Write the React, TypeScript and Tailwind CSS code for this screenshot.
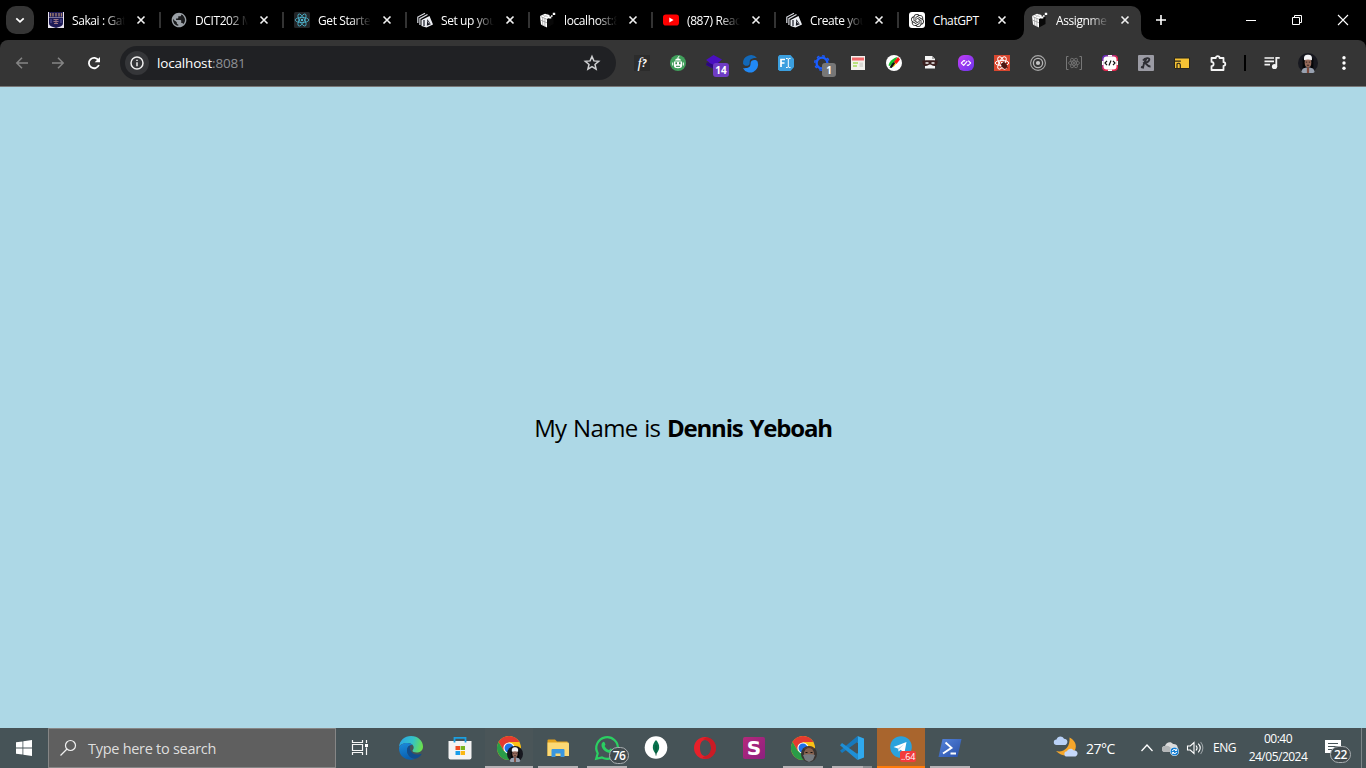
import React from 'react';
import { SiOpenai } from 'react-icons/si';

type IconProps = { children: React.ReactNode; size?: number; className?: string };

function Icon({ children, size = 16, className = '' }: IconProps) {
  return (
    <svg width={size} height={size} viewBox={`0 0 ${size} ${size}`} fill="none" className={`block shrink-0 overflow-visible ${className}`}>
      {children}
    </svg>
  );
}

/* ---------- favicons ---------- */

const CrestIcon = () => (
  <Icon>
    <rect width="16" height="16" fill="#e9e4ee" />
    <path d="M1 0h14v10c0 3.500-.5 4-7 6-6.500-2-7-2.500-7-6z" fill="#1d1a56" />
    <path d="M2.500 1v3.500M5 1v3.500M8 1v3.500M11 1v3.500M13.500 1v3.500" stroke="#a5836f" strokeWidth="1.300" />
    <path d="M1 5.500h14" stroke="#b9b4d2" strokeWidth=".6" />
    <path d="M5.500 7.500h5M8 7v5M5.500 9.500h5M6 11.500h4" stroke="#a98088" strokeWidth=".9" />
    <path d="M3 7v4M13 7v4" stroke="#5d5aa0" />
  </Icon>
);

const GlobeIcon = () => (
  <Icon>
    <circle cx="8" cy="8" r="5.500" fill="#1b1c1e" />
    <path
      transform="translate(-.8 -.8) scale(.735)"
      fill="#9aa0a6"
      d="M12 2C6.480 2 2 6.480 2 12s4.480 10 10 10 10-4.480 10-10S17.520 2 12 2zm-1 17.930c-3.950-.49-7-3.850-7-7.930 0-.62.08-1.210.21-1.790L9 15v1c0 1.100.9 2 2 2v1.930zm6.900-2.540c-.26-.81-1-1.390-1.900-1.390h-1v-3c0-.55-.45-1-1-1H8v-2h2c.55 0 1-.45 1-1V7h2c1.100 0 2-.9 2-2v-.41c2.930 1.190 5 4.060 5 7.410 0 2.080-.8 3.970-2.100 5.390z"
    />
    <path d="M3 7c1 2 3 2 5 2" stroke="#9aa0a6" strokeWidth="1.500" />
  </Icon>
);

function Atom({ color, w = 0.8 }: { color: string; w?: number }) {
  return (
    <g stroke={color} strokeWidth={w}>
      <ellipse cx="8" cy="8" rx="6.800" ry="2.600" />
      <ellipse cx="8" cy="8" rx="6.800" ry="2.600" transform="rotate(60 8 8)" />
      <ellipse cx="8" cy="8" rx="6.800" ry="2.600" transform="rotate(120 8 8)" />
      <circle cx="8" cy="8" r="1.200" fill={color} stroke="none" />
    </g>
  );
}

const ReactIcon = () => (
  <Icon>
    <rect width="16" height="16" rx="1.500" fill="#232629" />
    <Atom color="#4fb8d2" />
  </Icon>
);

const ExpoRouterIcon = () => (
  <Icon>
    <path d="M.8 11V5L8 1.200M2.900 13V6.600L10.500 2.500" stroke="#d9dbe2" strokeWidth="1.200" />
    <path d="M4.500 8 12.500 4 16 12.500 9.500 15.500 4.500 14z" fill="#eceef3" />
    <path d="m10.300 7 3.500 5.200-4 1.500z" fill="#171821" /><path d="M7 8v6" stroke="#23242e" strokeWidth="1.300" />
    <path d="m10.800 9.500 1.500 2.200" stroke="#eceef3" strokeWidth=".7" />
  </Icon>
);

const CubeIcon = () => (
  <Icon>
    <path d="M7 7 13.500 5v7L7 15.500z" fill="#080808" />
    <path d="M0 4 5 1.800l4.500 1.200V5.500L7 7v8.500L1 12.500z" fill="#fff" />
    <path d="M.3 8l6.700 2.800M.5 4.500 7 7.300M2.700 5v8.500M4.900 6v8.800" stroke="#8f8f8f" strokeWidth=".7" />
    <path d="M2.500 3.200 8 4.800M7.300 2.300 4 5" stroke="#b0b0b0" strokeWidth=".6" />
    <path d="M8.500 4.500h2.800v2H8.500zM12.800.8h2.400v2.300h-2.400zM11 3.300h1.600v1.400H11z" fill="#fff" />
  </Icon>
);

const YouTubeIcon = () => (
  <Icon>
    <rect x="0" y="2.500" width="16" height="11" rx="2.800" fill="#f00" />
    <path d="m6.300 5.600 4.300 2.400-4.300 2.400z" fill="#fff" />
  </Icon>
);

const ChatGPTIcon = () => (
  <span className="flex size-4 shrink-0 items-center justify-center rounded-[3px] bg-white text-[#222]">
    <SiOpenai size={13} />
  </span>
);

type Tab = { title: string; icon: React.ReactNode };

const tabs: Tab[] = [
  { title: 'Sakai : Gat', icon: <CrestIcon /> },
  { title: 'DCIT202 M', icon: <GlobeIcon /> },
  { title: 'Get Starte', icon: <ReactIcon /> },
  { title: 'Set up you', icon: <ExpoRouterIcon /> },
  { title: 'localhost:8', icon: <CubeIcon /> },
  { title: '(887) Reac', icon: <YouTubeIcon /> },
  { title: 'Create you', icon: <ExpoRouterIcon /> },
  { title: 'ChatGPT', icon: <ChatGPTIcon /> },
];

const CloseX = () => (
  <Icon size={10}>
    <path d="m1.500 1.500 7 7m0-7-7 7" stroke="#f1f1f1" strokeWidth="1.600" />
  </Icon>
);

function TabTitle({ children }: { children: string }) {
  return (
    <span className="ml-2 w-[53px] shrink-0 whitespace-nowrap pt-px text-[12px] leading-4 tracking-[-0.4px] text-white [mask-image:linear-gradient(to_right,#000_62%,transparent_100%)]">
      {children}
    </span>
  );
}

function TabStrip() {
  return (
    <div className="flex h-10 items-start bg-black">
      <div className="ml-1.5 mt-1.5 flex size-7 items-center justify-center rounded-[10px] bg-[#353535]">
        <Icon size={10}><path d="m1.300 3.300 3.700 3.500 3.700-3.500" stroke="#fff" strokeWidth="1.800" /></Icon>
      </div>
      <div className="ml-[3px] flex">
        {tabs.map((t, i) => (
          <div key={i} className="flex h-10 w-[123px] items-center pl-[11px]">
            {t.icon}
            {t.title === 'ChatGPT' ? (
              <span className="ml-2 w-[53px] shrink-0 pt-px text-[12px] leading-4 tracking-[-0.4px] text-white">{t.title}</span>
            ) : (
              <TabTitle>{t.title}</TabTitle>
            )}
            <span className="ml-[11px]"><CloseX /></span>
            <span className={i < 7 ? 'ml-[13px] h-4 w-0.5 shrink-0 bg-[#333]' : 'w-0'} />
          </div>
        ))}
      </div>
      <div className="flex h-10 items-end">
        <svg width="10" height="10" viewBox="0 0 10 10" className="-ml-[7px] block"><path d="M10 0v10H0A10 10 0 0 0 10 0z" fill="#353535" /></svg>
        <div className="flex h-[34px] w-[117px] items-center rounded-t-[10px] bg-[#353535] pb-1.5 pl-2">
          <CubeIcon />
          <TabTitle>Assignme</TabTitle>
          <span className="ml-[11px]"><CloseX /></span>
        </div>
        <svg width="10" height="10" viewBox="0 0 10 10" className="block"><path d="M0 0v10h10A10 10 0 0 1 0 0z" fill="#353535" /></svg>
      </div>
      <div className="ml-1 flex h-10 items-center">
        <Icon size={12}><path d="M6 1v10M1 6h10" stroke="#fff" strokeWidth="1.600" /></Icon>
      </div>
      <div className="ml-auto flex h-10 items-center gap-9 pr-[18px]">
        <Icon size={10}><path d="M0 5.500h10" stroke="#fff" /></Icon>
        <Icon size={10}><path d="M.5 2.500h7v7h-7zM2.500 2.500v-2h7v7h-2" stroke="#fff" /></Icon>
        <Icon size={10}><path d="m0 0 10 10M10 0 0 10" stroke="#fff" strokeWidth="1.100" /></Icon>
      </div>
    </div>
  );
}

/* ---------- extensions ---------- */

function CountBadge({ children, color }: { children: string; color: string }) {
  return (
    <span className={`absolute left-[7px] top-2 flex h-[14px] items-center justify-center rounded-[3px] text-[10px] font-bold leading-none text-white ${color}`}>
      {children}
    </span>
  );
}

const extensions: React.ReactNode[] = [
  <span className="flex size-4 items-center justify-center bg-[#2c2c2c] font-['Liberation_Serif',serif] text-[15px] italic leading-none text-white">f<span className="font-['Open_Sans',sans-serif] text-[10px] font-bold">?</span></span>,
  <Icon>
    <circle cx="8" cy="8" r="8" fill="#41a05c" />
    <path d="M5 5.500C5.300 4 6.500 3.500 8 3.500s2.700.5 3 2z" fill="#fff" /><path d="M8 4V2L9.500 1.200" stroke="#fff" strokeWidth=".9" />
    <path d="M4 6.500h8v4.500c0 1.500-1.500 2.200-4 2.200s-4-.7-4-2.200z" fill="#fff" />
    <path d="M6.200 7.300v2M9.800 7.300v2" stroke="#287f43" strokeWidth="1.500" /><path d="M6 11.300h4" stroke="#287f43" />
    <path d="M2.700 7.500v3M13.300 7.500v3" stroke="#fff" />
  </Icon>,
  <span className="relative block">
    <Icon><path d="M7.500 0 16 4.500 12 8l2 4-6 2-8-4 3.500-2.500L0 5z" fill="#4a0fc0" /><path d="m1 7 7 3 5-2.500-1 5-4 1.500-8-4z" fill="#2b087d" /></Icon>
    <CountBadge color="w-4 bg-[#6f3cc4]">14</CountBadge>
  </span>,
  <Icon>
    <path d="M15 2.800A8 8 0 0 0 1 8.500C2 11 5 11.500 7 10c1.300-1 .3-3 1-4.700C9 3.300 13 3 15 2.800z" fill="#1268b8" />
    <path d="M1 13.200A8 8 0 0 0 15.700 7C15 4.800 11.500 4.500 9.500 6 8 7.200 9 9.500 8 11.200 7 13 3 13.200 1 13.200z" fill="#2189f5" />
  </Icon>,
  <Icon>
    <path d="M1.500 0h11L16 4v8l-3.500 4h-11L0 14.500v-13z" fill="#3b9fdf" />
    <path d="M3 12V4.500h4M3 8h3.500" stroke="#fff" strokeWidth="1.700" />
    <path d="M8 3.500h1.500l.8.700.8-.7H12.500M8 12.500h1.500l.8-.7.8.7H12.500M10.300 4v8" stroke="#fff" />
  </Icon>,
  <span className="relative block">
    <Icon><circle cx="8" cy="8" r="5.400" stroke="#1a5cff" strokeWidth="2.300" /><circle cx="8" cy="8" r="7.200" stroke="#1a5cff" strokeWidth="1.500" strokeDasharray="2.800 2.850" /></Icon>
    <CountBadge color="w-[14px] ml-px bg-[#777]">1</CountBadge>
  </span>,
  <Icon>
    <path d="M1 1h14v14H1z" fill="#f2f1ed" /><path d="M2 2.500h12v3H2z" fill="#f2696b" />
    <path d="M3 8h5M3 11h4" stroke="#a7dc5a" strokeWidth="1.400" /><path d="M9.500 7.500H13V12H9.500z" fill="#dad9d4" />
  </Icon>,
  <Icon>
    <circle cx="8" cy="8" r="8" fill="#fff" />
    <path d="M2.500 10.500C3 7 7 3 11.500 2L9 7l-5 4z" fill="#17c02c" />
    <path d="M12 2 14 4.500 10.500 9 7.800 7z" fill="#f11" /><path d="m6 8.500 2-1.500 1.500 2-4 4-2-.5z" fill="#111" /><path d="m9 8.500 2-1-3 4-1.500.5z" fill="#fb0" />
  </Icon>,
  <Icon>
    <path d="M3 1h7l3 3v9.500H3z" fill="#f5f5f5" /><path d="M10 1v3h3z" fill="#aaa" />
    <path d="M.5 5.500c4-.5 11-.5 15 0 .5 3-1 5.500-3 5.500-2.500 0-3-1.500-4.500-1.500S6 11 3.500 11c-2 0-3.500-2.500-3-5.500z" fill="#3a1f1e" /><path d="M3.500 8h3M9.500 8h3" stroke="#f2f2f2" strokeWidth="1.300" />
  </Icon>,
  <Icon>
    <defs><linearGradient id="loopFill" x2="1" y2="1"><stop stopColor="#c23df5" /><stop offset="1" stopColor="#6a35ec" /></linearGradient></defs>
    <rect width="16" height="16" rx="6" fill="url(#loopFill)" />
    <path d="M7.200 5.900 5.700 5.700 3.400 8l2.300 2.300L9.300 6.200M8.800 10.100l1.500.2L12.600 8l-2.300-2.300" stroke="#fff" strokeWidth="1.200" strokeLinejoin="round" />
  </Icon>,
  <Icon>
    <rect width="16" height="16" fill="#d9472f" /><Atom color="#fff" w={1} />
    <ellipse cx="10.200" cy="10.500" rx="2.600" ry="3.300" transform="rotate(-35 10.200 10.500)" fill="#4b1712" /><path d="m7 9 7 4M7 12l6-4M10 6l1 8" stroke="#4b1712" strokeWidth=".8" />
  </Icon>,
  <Icon>
    <circle cx="8" cy="8" r="7.400" stroke="#a8a8a8" strokeWidth="1.100" /><circle cx="8" cy="8" r="4.600" stroke="#b5b5b5" strokeWidth="1.300" /><circle cx="8" cy="8" r="2.100" fill="#c4c4c4" />
  </Icon>,
  <Icon>
    <g transform="translate(1.600 1.600) scale(.8)"><Atom color="#7a7a7a" w={0.9} /></g>
    <path d="M2.500 1.500H.5v13h2M13.500 1.500h2v13h-2" stroke="#777" />
  </Icon>,
  <Icon>
    <defs><linearGradient id="codeFill" x2="1" y2="1"><stop stopColor="#4b2fd5" /><stop offset=".55" stopColor="#e5264e" /><stop offset="1" stopColor="#e5264e" /></linearGradient></defs>
    <rect width="16" height="16" rx="4" fill="url(#codeFill)" /><rect x="1.500" y="1.500" width="13" height="13" rx="3" fill="#fff" />
    <path d="M.8 6v4M15.200 6v4M6 .8h4M6 15.200h4" stroke="#fff" strokeWidth="1.600" />
    <path d="M5 5.800 3 8l2 2.200M11 5.800 13 8l-2 2.200M9 5.500 7 10.500" stroke="#111" strokeWidth="1.200" />
  </Icon>,
  <Icon>
    <rect width="16" height="16" rx="1" fill="#9b9ba4" />
    <path d="M5 5.500C7 2.800 12 2.200 11.300 4.800c-.4 1.700-2.800 2.700-4.300 2.900 1.500 1 2.500 4 5.500 3.800M8.500 3.500C7 6 5.500 9 5 12.500l-2-.5" stroke="#2e2e33" strokeWidth="1.900" />
  </Icon>,
  <Icon>
    <path d="M.5 3h15v10.500H.5z" fill="#f6c334" stroke="#29261c" />
    <path d="M1 6.200h5.800M3 13V8.500M3 9c1-1.200 3.300-1 3.300 1V13" stroke="#29261c" strokeWidth="1.200" />
  </Icon>,
  <Icon>
    <path d="M1.500 3h4.300a1.900 1.900 0 0 1 3.800 0h3.900v4.200a1.800 1.800 0 0 1 0 3.600V15h-12v-3.900a2.100 2.100 0 0 0 0-4.200z" stroke="#f5f5f5" strokeWidth="1.800" strokeLinejoin="round" />
  </Icon>,
];

const ProfileFace = ({ size = 16 }: { size?: number }) => (
  <svg width={size} height={size} viewBox="0 0 18 18" className="block">
    <circle cx="9" cy="9" r="9" fill="#17181f" />
    <path d="M3 17c.8-3.500 3-4 6-4s5.200.5 6 4a9 9 0 0 1-12 0z" fill="#98a1b0" />
    <path d="M5.300 5v8.500M12.700 5v8.500" stroke="#050507" strokeWidth="2.200" />
    <ellipse cx="9" cy="8.500" rx="3" ry="4.300" fill="#966b5c" />
    <path d="M5.500 6.500C5 2.500 6.500 1.500 9 1.500s4 1 3.500 5c-2-.8-5-.8-7 0z" fill="#f4f4f6" />
    <path d="M7 8.200h1.300M9.700 8.200H11M8 11h2" stroke="#2a1b18" strokeWidth=".8" /><path d="M8 18v-4l1-2 1 2v4z" fill="#7f4a3b" />
  </svg>
);

function Toolbar() {
  return (
    <div className="flex h-[47px] items-center bg-black">
      <div className="flex h-full w-full items-center rounded-t-[8px] border-b border-[#777] bg-[#353535] pl-[15px]">
        <Icon size={14}><path d="M13 7H2M7 1.800 1.800 7 7 12.200" stroke="#858585" strokeWidth="1.500" /></Icon>
        <Icon size={14} className="ml-[22px]"><path d="M1 7h11M7 1.800 12.200 7 7 12.200" stroke="#858585" strokeWidth="1.500" /></Icon>
        <Icon size={14} className="ml-[22px]">
          <path d="M11.900 9A5.200 5.200 0 1 1 11.500 4.300" stroke="#fff" strokeWidth="1.800" /><path d="M13 1v5.300H7.700z" fill="#fff" />
        </Icon>
        <div className="ml-[19px] flex h-[34px] w-[496px] items-center rounded-full bg-[#202124] pl-[5px] pr-4">
          <span className="flex size-6 items-center justify-center rounded-full bg-[#353639]">
            <Icon size={14}><circle cx="7" cy="7" r="6" stroke="#eee" strokeWidth="1.500" /><path d="M7 6.200v4M7 3.700v1.400" stroke="#eee" strokeWidth="1.500" /></Icon>
          </span>
          <span className="ml-2 text-[13.500px] leading-5 tracking-[-0.17px] text-white">localhost<span className="text-[#8d9095]">:8081</span></span>
          <Icon className="ml-auto"><path d="m8 1.500 1.900 4.400 4.800.4L11 9.500l1.100 4.700L8 11.700l-4.100 2.500L5 9.500 1.300 6.300l4.800-.4z" stroke="#d0d1d3" strokeWidth="1.500" /></Icon>
        </div>
        <div className="ml-[18px] flex items-center gap-5">
          {extensions.map((e, i) => <div key={i} className="size-4">{e}</div>)}
        </div>
        <span className="ml-[18px] h-4 w-0.5 bg-black" />
        <Icon className="ml-[18px]">
          <path d="M.5 3H10M.5 6.300H10M.5 9.600H6" stroke="#f3f3f3" strokeWidth="1.700" /><path d="M12.300 12V2.800H15.700" stroke="#f3f3f3" strokeWidth="1.800" /><circle cx="10.500" cy="11.500" r="2.600" fill="#f3f3f3" />
        </Icon>
        <div className="ml-[18px]"><ProfileFace size={20} /></div>
        <Icon className="ml-[18px]"><circle cx="8" cy="2.800" r="1.700" fill="#fff" /><circle cx="8" cy="8" r="1.700" fill="#fff" /><circle cx="8" cy="13.200" r="1.700" fill="#fff" /></Icon>
      </div>
    </div>
  );
}

/* ---------- taskbar ---------- */

function TaskBadge({ children }: { children: string }) {
  return (
    <span className="absolute left-[14px] top-[11px] flex h-[17px] w-5 items-center justify-center rounded-full border border-[#a9aeb1] bg-[#414a4e] text-[12px] font-semibold leading-none tracking-[-0.5px] text-white">
      {children}
    </span>
  );
}

const ChromeIcon = () => (
  <Icon size={24}>
    <circle cx="12" cy="12" r="12" fill="#fbc116" />
    <path d="M1.600 6A12 12 0 0 1 22.400 6H12l-5.200 9z" fill="#e53a2f" />
    <path d="M1.600 6A12 12 0 0 0 12 24l5.200-9-10.400 0z" fill="#2a9c48" />
    <circle cx="12" cy="12" r="5.600" fill="#fff" /><circle cx="12" cy="12" r="4.500" fill="#1f72e8" />
  </Icon>
);

const EdgeIcon = () => (
  <Icon size={24}>
    <defs>
      <linearGradient id="edgeTop" x1="0" y1=".3" x2="1" y2=".5"><stop stopColor="#2aa6e6" /><stop offset=".55" stopColor="#34c2c8" /><stop offset="1" stopColor="#6be04b" /></linearGradient>
      <linearGradient id="edgeLeft" x1="0" y1="0" x2=".3" y2="1"><stop stopColor="#1b8cdc" /><stop offset="1" stopColor="#0a60b0" /></linearGradient>
    </defs>
    <path d="M0 11C.5 4.500 5.500 0 12 0c7 0 12 5 12 10.500 0 4-3 6-6.500 6-2.500 0-4-.8-4-1.700s1.200-1.300 1.200-3.300C14.700 9 12 7 8.500 7 4 7 1 9 0 11z" fill="url(#edgeTop)" />
    <path d="M0 12c.5-3 4-5 8.500-5 2 0 4 .8 5.200 2C10.500 8.500 8 11 8 14.500c0 4.500 4 8.500 8.500 8.200C10 25.500 0 22.500 0 12z" fill="url(#edgeLeft)" />
    <path d="M8 14.500c0-3 1.500-5 4-5.500-1.300 1.200-1.500 3-1 4.500 1 3.500 4.500 5.500 8 5 1.300-.2 2.300-.5 3-.8.500-.2.700.2.500.5-1.200 2-3.300 3.800-6 4.500C12 23 8 19 8 14.500z" fill="#104d8f" />
  </Icon>
);

type AppEntry = { icon: React.ReactNode; bar?: string; cell?: string };

const apps: AppEntry[] = [
  { icon: <EdgeIcon /> },
  {
    icon: (
      <Icon size={24}>
        <path d="M.5 5h23v16.500q0 2-2 2h-19q-2 0-2-2z" fill="#f4f4f4" />
        <path d="M6.500 6.500V1.800h11v4.700" stroke="#1b9fe0" strokeWidth="1.800" />
        <path d="M7.500 10H12v4H7.500z" fill="#ee4d24" /><path d="M12.600 10H17v4h-4.400z" fill="#7ab51d" /><path d="M7.500 15H12v4H7.500z" fill="#1a9eea" /><path d="M12.600 15H17v4h-4.400z" fill="#fbb813" />
      </Icon>
    ),
  },
  {
    icon: <><ChromeIcon /><span className="absolute left-[10px] top-[10px]"><ProfileFace size={16} /></span></>,
    bar: 'w-12 bg-[#b6b3b6]', cell: 'bg-[#4a5558]',
  },
  {
    icon: (
      <Icon size={24}>
        <path d="M1.500 4.500q0-1 1-1H9l2 2h10.500V20h-20z" fill="#e3a21c" /><path d="M1.500 8V6.500h20.500q1 0 1 1V20H1.500z" fill="#fcd975" />
        <path d="M5.500 21v-7q0-1 1-1h11q1 0 1 1v7h-4v-3.500h-5V21z" fill="#3a97e0" />
      </Icon>
    ),
    bar: 'w-10 bg-[#b6b3b6]',
  },
  {
    icon: (
      <>
        <Icon size={24}>
          <path d="m1.200 22.800 1.500-5.500A10.800 10.800 0 1 1 7 21.500z" stroke="#2bcf62" strokeWidth="2.200" />
          <path d="M7.500 6.500c1-1 1.800-.8 2.200.2l.7 1.600c.2.600-.8 1.500-.7 1.900 1 2 2.600 3.200 4.300 3.700.6 0 1.200-1.600 1.800-1.300l2 1c.6.400.2 2-.7 2.700C14 18.500 6 14 6.500 8.500c0-.8.4-1.500 1-2z" fill="#2bcf62" />
        </Icon>
        <TaskBadge>76</TaskBadge>
      </>
    ),
    bar: 'w-10 bg-[#b6b3b6]',
  },
  { icon: <Icon size={24}><circle cx="12" cy="11.500" r="11.300" fill="#fff" /><path d="M12 4c4.500 5 4 10 0 14-4-4-4.500-9 0-14z" fill="#08724d" /><path d="M12 9v10.500" stroke="#0a4f36" strokeWidth=".9" /></Icon> },
  {
    icon: (
      <Icon size={24}>
        <path fillRule="evenodd" d="M12 1C18.500 1 23 6 23 12s-4.500 11-11 11S1 18 1 12 5.500 1 12 1zm0 3C8.500 4 7 8 7 12s1.500 8 5 8 6-4 6-8-2.500-8-6-8z" fill="#e8202a" />
        <path d="M14 1.200c5.500 1 9 5.500 9 10.800s-3.500 9.800-9 10.800c-2 .2-3-.3-4.500-1L12 20c3.500 0 6-4 6-8s-2.500-8-6-8l-2-1z" fill="#ae1520" opacity=".5" />
      </Icon>
    ),
  },
  {
    icon: (
      <span className="flex size-[22px] items-center justify-center rounded-[2px] bg-[linear-gradient(to_bottom_right,#b52a7a,#8d1f80)] font-['DejaVu_Sans',sans-serif] text-[20px] font-bold leading-none text-white">S</span>
    ),
  },
  {
    icon: (
      <>
        <ChromeIcon />
        <span className="absolute left-[10px] top-[10px]">
          <Icon><circle cx="8" cy="8" r="8" fill="#393431" /><ellipse cx="8" cy="8" rx="5" ry="6.500" fill="#85614e" /><path d="M2 9c2-1 10-1 12 0l-2 5-4 2-4-2z" fill="#777b80" /><path d="M4.500 6.500h2M9.500 6.500h2" stroke="#161212" strokeWidth="1.200" /><path d="M3 3c3-2 7-2 10 0" stroke="#5c3b2c" strokeWidth="1.500" /></Icon>
        </span>
      </>
    ),
    bar: 'w-10 bg-[#b6b3b6]',
  },
  {
    icon: (
      <Icon size={24}>
        <path d="M17.500 0 24 2.500v19L17.500 24z" fill="#2fa9ee" /><path d="M17.500 0 0 14.700l2 2.200L18 5.500z" fill="#1679bd" /><path d="M17.500 24 0 9.300l2-2.200L18 18.500z" fill="#1e8fd6" />
        <path d="M18 6.500v11L10.500 12z" fill="#465257" />
      </Icon>
    ),
    bar: 'w-10 bg-[linear-gradient(to_right,#b6b3b6_31px,#8b8f92_31px)]',
  },
  {
    icon: (
      <>
        <Icon size={24}>
          <circle cx="12" cy="11" r="10.800" fill="#2ba2dc" /><path d="M4.500 11 17.500 6 15.500 16.500l-4-2.800-1.800 1.800-.8-3z" fill="#fff" /><path d="M8.900 12.500 15 8.300l-5 5.200-.5 2z" fill="#b8d4e6" />
        </Icon>
        <span className="absolute left-[11px] top-[15px] flex h-[11px] w-4 items-center justify-center rounded-[2px] bg-[#f23c3c] text-[9px] leading-none tracking-[-0.2px] text-white">..64</span>
      </>
    ),
    bar: 'w-12 bg-[#ff7b0a]', cell: 'bg-[#a9652d]',
  },
  {
    icon: (
      <Icon size={24}>
        <defs><linearGradient id="shellFill" x2="1" y2="1"><stop stopColor="#5585dc" /><stop offset="1" stopColor="#2a50a8" /></linearGradient></defs>
        <path d="M4.500 3H23.500L19.500 21H.5z" fill="url(#shellFill)" /><path d="m7.500 6.500 6 5.300-8.500 5.700M12.500 17.500h5.500" stroke="#fff" strokeWidth="1.900" />
      </Icon>
    ),
    bar: 'w-10 bg-[#b6b3b6]',
  },
];

function Taskbar() {
  return (
    <div className="flex h-10 bg-[#465357] text-white">
      <div className="flex w-12 items-center justify-center">
        <Icon><path d="M0 2.300 6.500 1.400V7.600H0zM7.300 1.300 16 0v7.600H7.300zM0 8.400h6.500v6.200L0 13.700zM7.300 8.400H16V16l-8.700-1.300z" fill="#fff" /></Icon>
      </div>
      <div className="flex w-72 items-center border border-[#868686] bg-[#5f5f5f] pl-[11px]">
        <Icon><circle cx="10.500" cy="5.500" r="5" stroke="#f0f0f0" strokeWidth="1.200" /><path d="M7 9 .5 15.500" stroke="#f0f0f0" strokeWidth="1.200" /></Icon>
        <span className="ml-3 pt-0.5 text-[14.500px] leading-5 tracking-[-0.28px] text-[#dedede]">Type here to search</span>
      </div>
      <div className="flex w-12 items-center justify-center">
        <Icon>
          <path d="M.5 0v2.500h10V0M.5 4.500h10v6H.5zM.5 15v-2.500h10V15M14.500 0v3M14.500 7.500V15" stroke="#f5f5f5" strokeWidth="1.200" /><path d="M13 4h3v3h-3z" fill="#fff" />
        </Icon>
      </div>
      <div className="ml-[3px] flex gap-px">
        {apps.map((a, i) => (
          <div key={i} className={`flex w-12 flex-col items-center ${a.cell ?? ''}`}>
            <div className="flex h-[38px] items-center pt-0.5"><div className="relative">{a.icon}</div></div>
            <div className={`h-0.5 ${a.bar ?? 'w-0'}`} />
          </div>
        ))}
      </div>
      <div className="ml-auto flex items-center">
        <Icon size={24}>
          <path d="M15.500 1.500c5 2.500 8 7.500 5.500 12.500-2.500 5.500-11.500 8.500-19 1C9.500 17 16.500 11.500 15.500 1.500z" fill="#f5a62b" />
          <path d="M2.500 9a2.700 2.700 0 0 1 0-5.400C3.500-.5 8.500-.5 10 2.800c4 0 4.500 4.500 1.500 6.200z" fill="#b9d1f7" /><path d="M13 20.500a2.600 2.600 0 0 1 0-5.200c1-3.300 5.500-3.300 6.500-1 4.500 0 5.500 4.500 2 6.200z" fill="#c5d8fa" />
        </Icon>
        <span className="ml-2 w-[30px] whitespace-nowrap pt-px text-[14px] leading-5 tracking-[-0.5px]">27°C</span>
        <Icon size={12} className="ml-[25px]"><path d="m.5 9 5.500-6 5.500 6" stroke="#fff" strokeWidth="1.300" /></Icon>
        <Icon className="ml-[10px]">
          <path d="M2 12a3 3 0 0 1 0-6c1-4 6-5 8-2 4-.5 5 3 5 5l-3 3z" fill="#dcdcdc" /><path d="M2 6c3-1 6 1 7 4l-2 2H2a3 3 0 0 1 0-6z" fill="#b4b7b8" />
          <circle cx="11.500" cy="11.500" r="4.500" fill="#fff" /><circle cx="11.500" cy="11.500" r="4" fill="#147ed2" /><path d="M9.300 11c.5-1.700 2.800-2 4-.8M13.700 8.700v1.800H12M13.700 12c-.5 1.700-2.800 2-4 .8M9.300 14.300v-1.800H11" stroke="#fff" strokeWidth="1" />
        </Icon>
        <Icon className="ml-2">
          <path d="M.5 6h2.800L7 2.500v11L3.300 10H.5z" stroke="#fff" strokeWidth="1.100" /><path d="M9 5.500c1.300 1.500 1.300 3.500 0 5M11.300 3.700c2.300 2.500 2.300 6 0 8.600" stroke="#fff" strokeWidth="1.100" /><path d="M13.600 2c3 3.500 3 8.500 0 12" stroke="#9ba2a5" strokeWidth="1.100" />
        </Icon>
        <span className="ml-[10px] w-[23px] text-[12px] leading-4 tracking-[-0.5px]">ENG</span>
        <div className="ml-3 flex w-[60px] flex-col items-center whitespace-nowrap pb-px text-[12px] leading-[18px] tracking-[-0.5px]">
          <span>00:40</span>
          <span>24/05/2024</span>
        </div>
        <div className="relative ml-[17px] mr-[10px] w-[26px]">
          <Icon><path d="M0 0h16v13h-5l-3.500 3.500V13H0z" fill="#fff" /><path d="M3 3.500h10M3 6.500h10M3 9.500h7" stroke="#465357" /></Icon>
          <span className="absolute left-[5px] top-[6px] flex h-[17px] w-[21px] items-center justify-center rounded-full border border-[#a9aeb1] bg-[#414a4e] text-[12px] font-semibold leading-none tracking-[-0.3px]">22</span>
        </div>
        <span className="mr-1 h-10 w-px bg-[#7c8588]" />
      </div>
    </div>
  );
}

export default function App() {
  return (
    <div className="flex h-[768px] w-[1366px] flex-col overflow-hidden bg-black font-['Open_Sans','Noto_Sans',sans-serif]">
      <TabStrip />
      <Toolbar />
      <main className="flex flex-1 items-center justify-center bg-[#add8e6]">
        <p className="mt-[41px] whitespace-nowrap text-[24px] leading-8 tracking-[-0.65px] text-black [word-spacing:1px]">
          My Name is <strong className="font-bold tracking-[-1.2px] [word-spacing:2px]">Dennis Yeboah</strong>
        </p>
      </main>
      <Taskbar />
    </div>
  );
}
